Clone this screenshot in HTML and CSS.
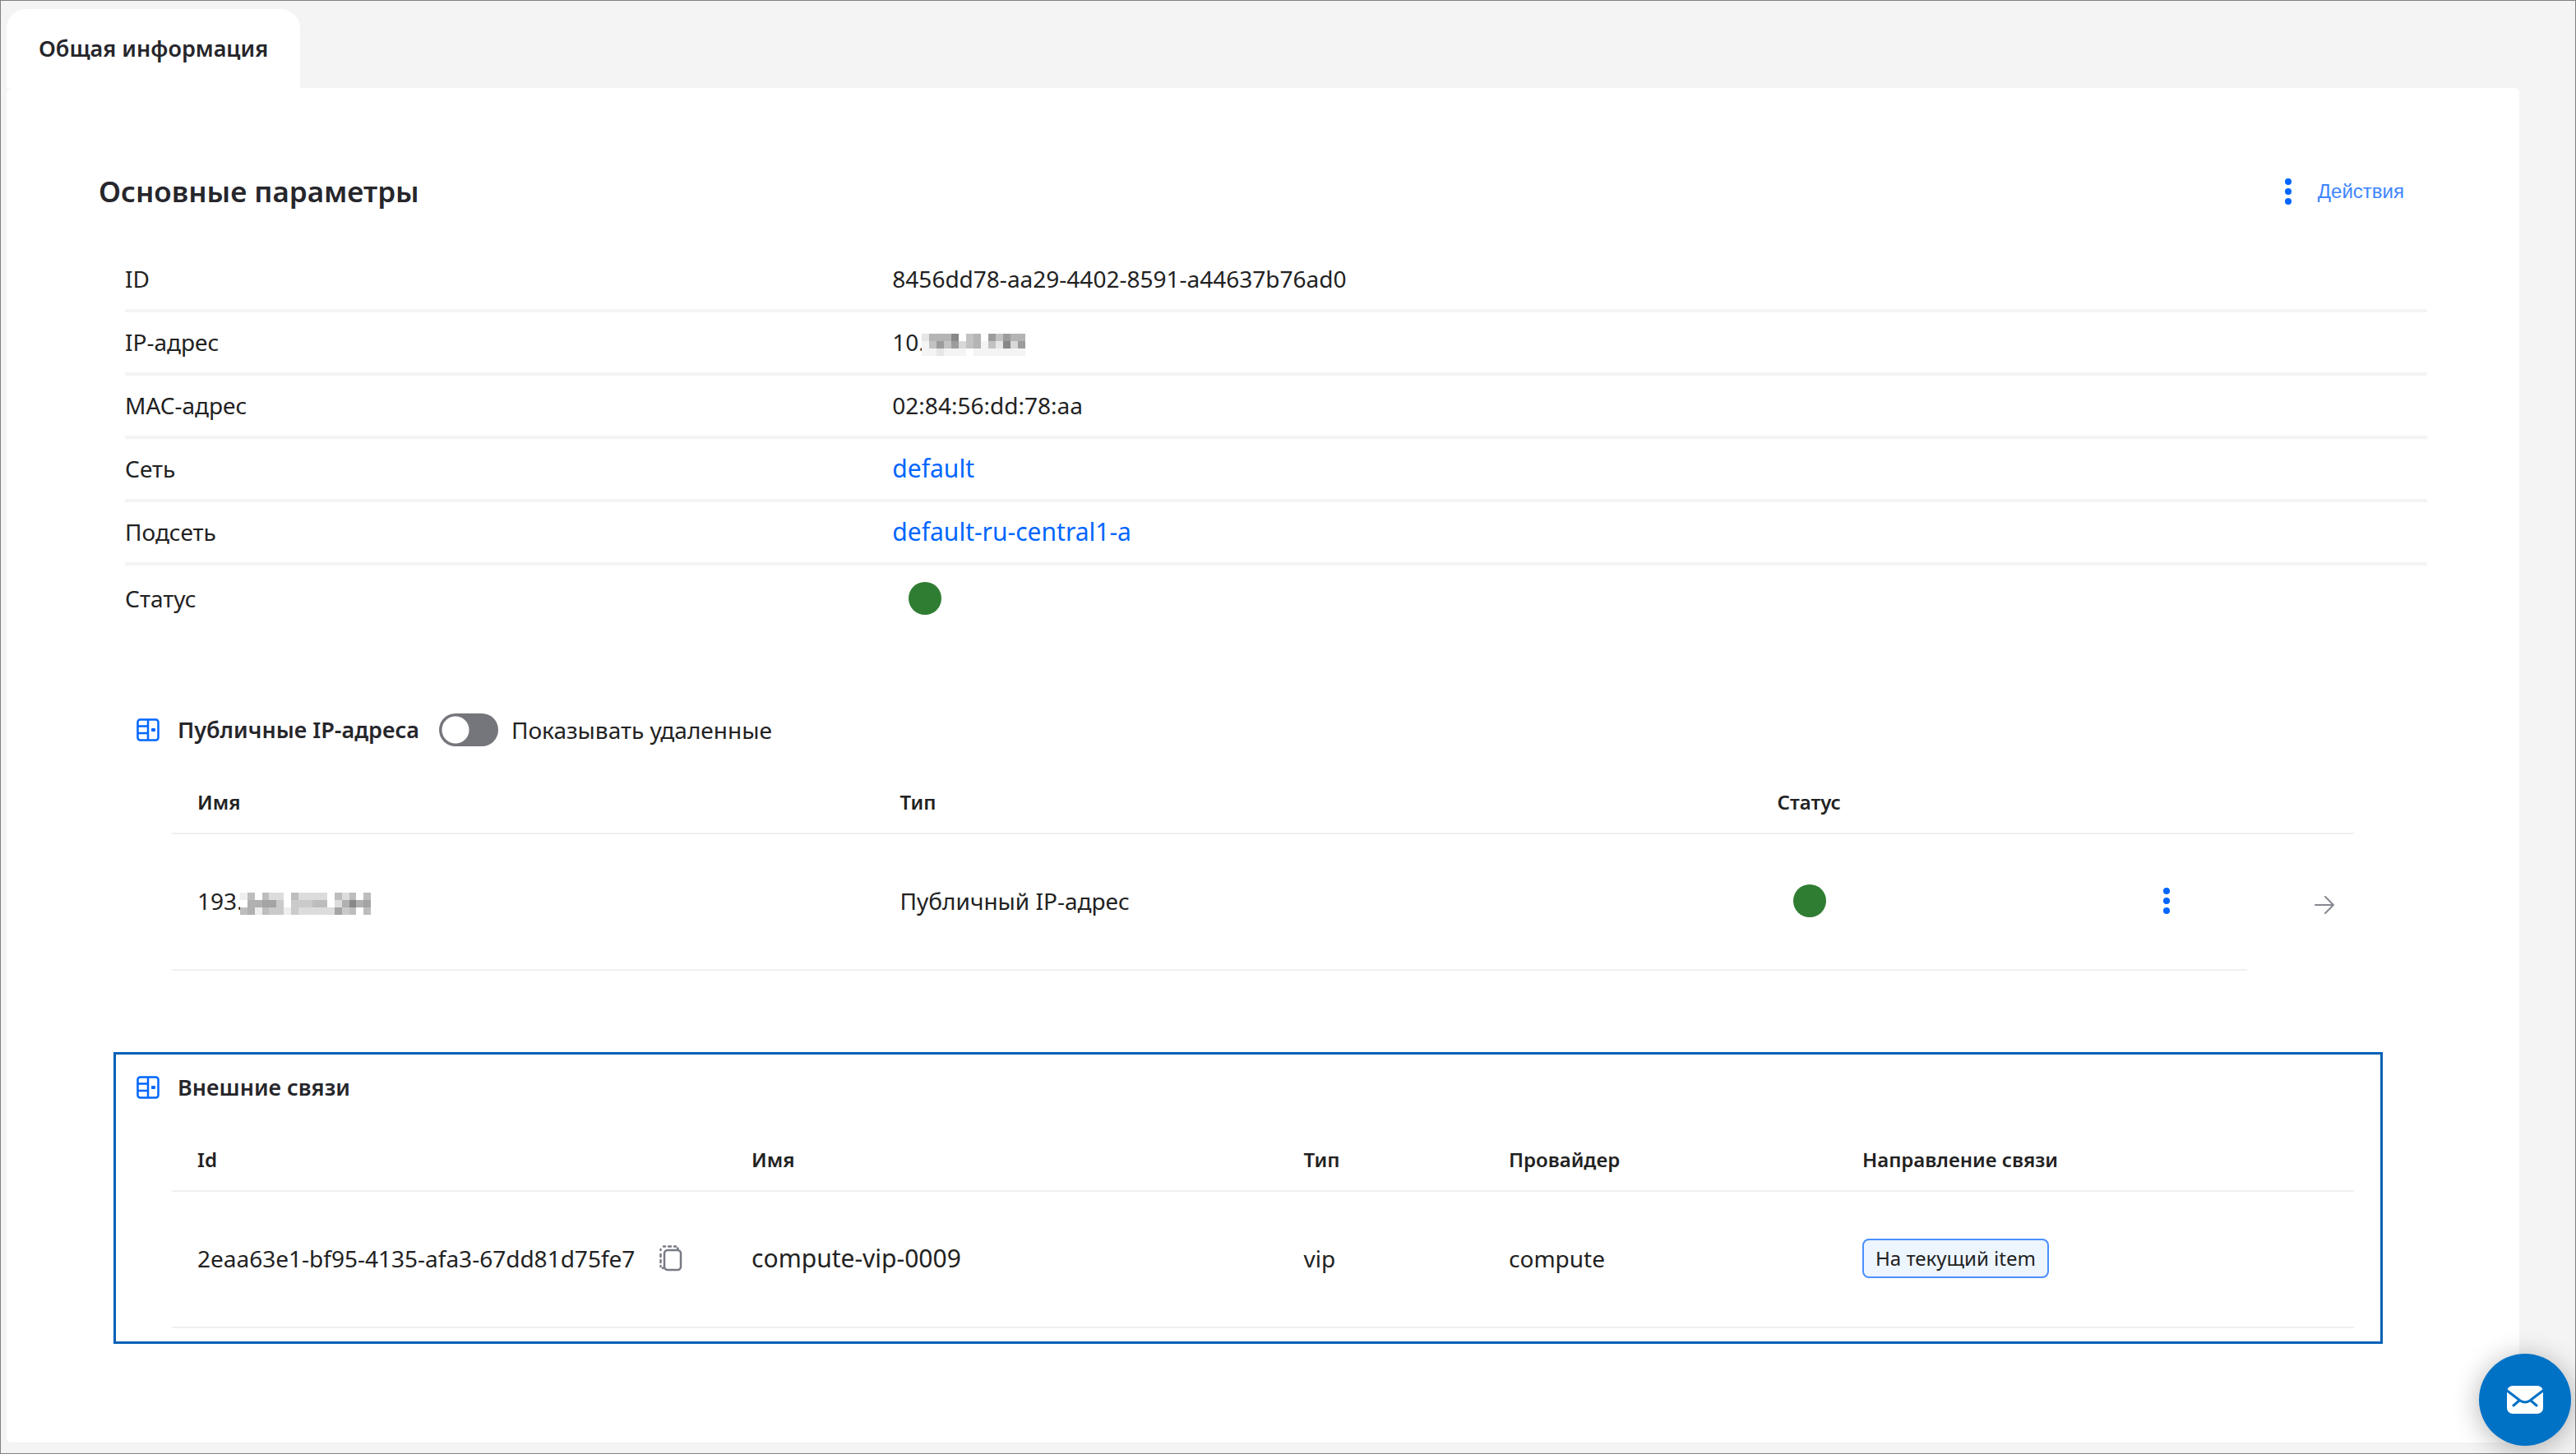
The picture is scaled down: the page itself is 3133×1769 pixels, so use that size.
FILE: index.html
```
<!DOCTYPE html>
<html lang="ru">
<head>
    <meta charset="UTF-8">
    <title>Общая информация</title>
    <link rel="stylesheet" href="styles.css">
</head>
<body>
    <div class="tabs">
        <button class="tab">Общая информация</button>
    </div>

    <main class="panel">
        <div class="panel-header">
            <h1>Основные параметры</h1>
            <button class="actions">
                <svg width="8" height="32" viewBox="0 0 8 32" fill="#0066ff"><circle cx="4" cy="4" r="4"/><circle cx="4" cy="16" r="4"/><circle cx="4" cy="28" r="4"/></svg>
                Действия
            </button>
        </div>

        <dl class="params">
            <div class="row"><dt>ID</dt><dd>8456dd78-aa29-4402-8591-a44637b76ad0</dd></div>
            <div class="row"><dt>IP-адрес</dt><dd>10.<svg class="mask" width="126" height="27" viewBox="0 0 14 3" preserveAspectRatio="none" shape-rendering="crispEdges"><path fill="#fff" d="M0 0h14v3H0z"/><path fill="#e6e6e6" d="M0 0h1v1H0zM2 2h1v1H2zM10 1h1v1h-1z"/><path fill="#b4b4b4" d="M1 0h3v1H1zM7 0h1v2H7zM12 0h2v1h-2z"/><path fill="#888" d="M4 0h1v1H4zM11 1h1v1h-1z"/><path fill="#9c9c9c" d="M2 1h1v1H2zM4 1h1v1H4zM9 0h1v1H9zM13 1h1v1h-1zM11 0h1v1h-1z"/><path fill="#c2c2c2" d="M1 1h1v1H1zM3 1h1v1H3zM6 0h1v2H6zM10 0h1v1h-1zM9 1h1v1H9z"/><path fill="#d8d8d8" d="M5 1h1v1H5zM12 1h1v1h-1z"/><path fill="#f4f4f4" d="M0 1h1v2H0zM1 2h1v1H1zM3 2h3v1H3zM8 1h1v1H8zM7 2h7v1H7z"/></svg></dd></div>
            <div class="row"><dt>MAC-адрес</dt><dd>02:84:56:dd:78:aa</dd></div>
            <div class="row"><dt>Сеть</dt><dd><a href="#">default</a></dd></div>
            <div class="row"><dt>Подсеть</dt><dd><a href="#">default-ru-central1-a</a></dd></div>
            <div class="row row-status"><dt>Статус</dt><dd><span class="dot"></span></dd></div>
        </dl>

        <section class="block">
            <div class="block-title">
                <svg class="icon" width="28" height="28" viewBox="0 0 28 28" fill="none" stroke="#0066ff" stroke-width="2.500"><rect x="1.500" y="1.500" width="25" height="25" rx="3"/><path d="M14 1v26M1 9.500h13M1 18h13"/><rect x="18" y="12" width="5" height="4" rx="1" fill="#0066ff" stroke="none"/></svg>
                <h2>Публичные IP-адреса</h2>
                <label class="switch"><input type="checkbox">Показывать удаленные</label>
            </div>
            <table class="ips">
                <thead>
                    <tr><th class="ip-name">Имя</th><th class="ip-type">Тип</th><th class="ip-status">Статус</th><th class="ip-menu"></th><th></th></tr>
                </thead>
                <tbody>
                    <tr>
                        <td>193.<svg class="mask" width="168" height="27" viewBox="0 0 19 3" preserveAspectRatio="none" shape-rendering="crispEdges"><path fill="#fff" d="M0 0h19v3H0z"/><path fill="#eee" d="M0 0h1v1H0zM2 2h1v1H2zM6 2h1v1H6z"/><path fill="#bdbdbd" d="M1 0h1v2H1zM3 0h1v1H3zM7 0h1v1H7zM13 0h1v1h-1zM15 0h1v1h-1zM17 0h1v1h-1zM0 2h1v1H0zM3 2h1v1H3zM15 2h1v1h-1zM17 2h1v1h-1zM10 1h2v1h-2z"/><path fill="#dcdcdc" d="M4 0h2v1H4zM8 0h4v1H8zM14 0h1v1h-1zM13 1h1v1h-1zM8 2h5v1H8z"/><path fill="#b0b0b0" d="M1 1h2v1H1zM14 1h1v1h-1zM1 2h1v1H1zM16 1h1v1h-1z"/><path fill="#a4a4a4" d="M3 1h2v1H3zM13 2h1v1h-1zM17 1h1v1h-1z"/><path fill="#cacaca" d="M5 1h1v2H5zM4 2h1v1H4zM7 1h3v1H7zM7 2h1v1H7zM14 2h1v1h-1z"/><path fill="#888" d="M15 1h1v1h-1z"/></svg></td>
                        <td>Публичный IP-адрес</td>
                        <td><span class="dot"></span></td>
                        <td><button class="icon-button" aria-label="Меню"><svg width="8" height="32" viewBox="0 0 8 32" fill="#0066ff"><circle cx="4" cy="4" r="4"/><circle cx="4" cy="16" r="4"/><circle cx="4" cy="28" r="4"/></svg></button></td>
                        <td class="open"><a href="#" aria-label="Открыть"><svg width="24" height="22" viewBox="0 0 24 22" fill="none" stroke="#858890" stroke-width="2" stroke-linecap="round" stroke-linejoin="round"><path d="M1 11h22M13 1l10 10-10 10"/></svg></a></td>
                    </tr>
                </tbody>
            </table>
        </section>

        <section class="block selected">
            <div class="block-title">
                <svg class="icon" width="28" height="28" viewBox="0 0 28 28" fill="none" stroke="#0066ff" stroke-width="2.500"><rect x="1.500" y="1.500" width="25" height="25" rx="3"/><path d="M14 1v26M1 9.500h13M1 18h13"/><rect x="18" y="12" width="5" height="4" rx="1" fill="#0066ff" stroke="none"/></svg>
                <h2>Внешние связи</h2>
            </div>
            <table class="links">
                <thead>
                    <tr><th class="link-id">Id</th><th class="link-name">Имя</th><th class="link-type">Тип</th><th class="link-provider">Провайдер</th><th>Направление связи</th></tr>
                </thead>
                <tbody>
                    <tr>
                        <td>
                            <div class="copy-cell">
                                2eaa63e1-bf95-4135-afa3-67dd81d75fe7
                                <button class="icon-button" aria-label="Копировать"><svg width="28" height="32" viewBox="0 0 28 32" fill="none" stroke="#777a84" stroke-width="2.500" stroke-linecap="round"><rect x="6" y="6" width="20" height="24" rx="4"/><path d="M5 1.500h2M11 1.500h3M18 1.500h2M22 3.500l.5.500M1.500 5v1M1.500 11v3M1.500 18v3M1.500 25v1M4 27.500l.5.500"/></svg></button>
                            </div>
                        </td>
                        <td class="name">compute-vip-0009</td>
                        <td>vip</td>
                        <td>compute</td>
                        <td><span class="tag">На текущий item</span></td>
                    </tr>
                </tbody>
            </table>
        </section>
    </main>

    <button class="mail" aria-label="Написать">
        <svg width="46" height="36" viewBox="0 0 46 36"><rect x="1" y="1" width="44" height="34" rx="7" fill="#fff"/><path d="M0 6l17 13q6 4 12 0L46 6M9 25l7-6M37 25l-7-6" fill="none" stroke="#0072c6" stroke-width="3" stroke-linecap="round"/></svg>
    </button>
</body>
</html>
```

FILE: styles.css
```
* {
    box-sizing: border-box;
}

body {
    margin: 0;
    min-height: 100vh;
    display: flex;
    flex-direction: column;
    padding: 10px 68px 13px 7px;
    border: 1px solid #808080;
    background-color: #f4f4f4;
    color: #222222;
    font-family: "Noto Sans", sans-serif;
    font-size: 28px;
    line-height: 36px;
}

button {
    border: none;
    background: none;
    font: inherit;
    padding: 0;
    cursor: pointer;
}

a {
    color: #0066ff;
    text-decoration: none;
}

svg {
    display: block;
}

h1,
h2 {
    margin: 0;
    color: #26262b;
    font-weight: 600;
}

h1 {
    font-size: 35px;
}

h2 {
    font-size: 27px;
}

.tab {
    height: 96px;
    padding: 0 39px;
    border-radius: 24px 24px 0 0;
    background: #ffffff;
    color: #26262b;
    font-size: 27px;
    font-weight: 600;
}

.panel {
    flex: 1;
    padding: 92px 112px 80px;
    border-radius: 6px;
    background: #ffffff;
}

.panel-header {
    display: flex;
    justify-content: space-between;
    align-items: center;
    height: 68px;
    padding-right: 28px;
}

.actions {
    display: flex;
    align-items: center;
    gap: 32px;
    color: #3d85ff;
    font-family: "Liberation Sans", Arial, sans-serif;
    font-size: 24px;
}

.params {
    margin: 36px 0 0 32px;
}

.row {
    display: grid;
    grid-template-columns: 1fr 2fr;
    align-items: center;
    height: 77px;
    padding-bottom: 2px;
    border-bottom: 4px solid #f4f4f4;
}

.row-status {
    border-bottom: none;
    height: 82px;
}

.row dd {
    margin: 0;
}

.row a,
.name {
    font-size: 30px;
}

.dot {
    display: block;
    width: 40px;
    height: 40px;
    margin-left: 20px;
    border-radius: 50%;
    background: #2f7d32;
}

.mask {
    display: inline-block;
    margin-left: -4px;
    vertical-align: middle;
}

.block {
    margin: 75px 54px 0 18px;
    padding: 0 32px 0 25px;
    border: 3px solid transparent;
}

.selected {
    margin-top: 96px;
    border-color: #0560b6;
    padding-bottom: 16px;
}

.block-title {
    display: flex;
    align-items: center;
    height: 80px;
}

.block-title h2 {
    margin-left: 22px;
}

.switch {
    display: flex;
    align-items: center;
    gap: 16px;
    margin-left: 24px;
}

.switch input {
    appearance: none;
    width: 72px;
    height: 40px;
    margin: 0;
    border-radius: 20px;
    background: radial-gradient(circle at 20px 20px, #ffffff 16px, #75767b 17px);
}

table {
    width: calc(100% - 43px);
    margin-left: 43px;
    table-layout: fixed;
    border-collapse: collapse;
}

th,
td {
    padding: 0 31px;
    border-bottom: 2px solid #f0f0f0;
    text-align: left;
}

th {
    height: 86px;
    padding-top: 10px;
    font-size: 24px;
    font-weight: 600;
}

td {
    height: 166px;
    padding-bottom: 3px;
}

.ip-name {
    width: 32.2%;
}

.ip-type {
    width: 40.2%;
}

.ip-status {
    width: 17.7%;
}

.ip-menu {
    width: 5%;
}

.open {
    border-bottom: none;
    padding: 6px 24px 0 0;
}

.open svg {
    margin-left: auto;
}

.icon-button {
    display: block;
}

.link-id {
    width: 25.4%;
}

.link-name {
    width: 25.3%;
}

.link-type {
    width: 9.4%;
}

.link-provider {
    width: 16.2%;
}

.copy-cell {
    display: flex;
    align-items: center;
    gap: 30px;
    white-space: nowrap;
}

.tag {
    display: inline-block;
    padding: 4px 14px;
    border: 2px solid #4a8fff;
    border-radius: 8px;
    background: #edf5ff;
    font-size: 24px;
}

.mail {
    position: fixed;
    right: 6px;
    bottom: 10px;
    display: flex;
    justify-content: center;
    align-items: center;
    width: 112px;
    height: 112px;
    border-radius: 50%;
    background: #0072c6;
    box-shadow: 0 4px 32px rgba(0, 0, 0, 0.3);
}
```
